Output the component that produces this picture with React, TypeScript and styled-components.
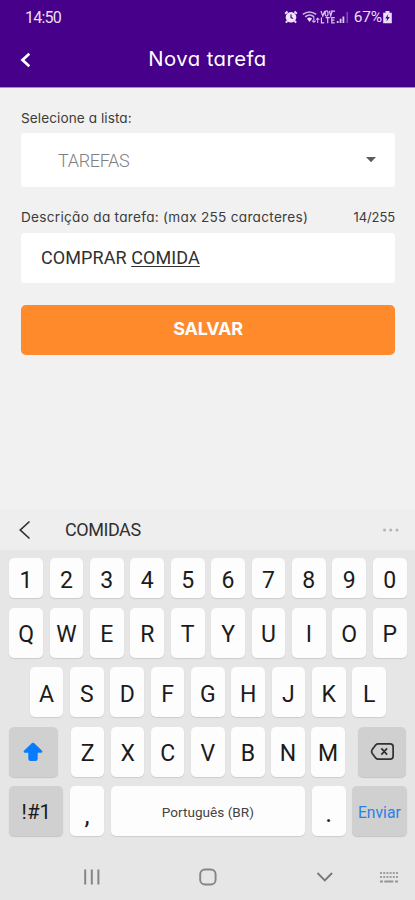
import React from 'react';
import styled, { createGlobalStyle } from 'styled-components';

const GlobalStyle = createGlobalStyle`
  * { box-sizing: border-box; }
  body { margin: 0; background: #f1f1f1; }
`;

const Screen = styled.div`
  width: 415px;
  height: 900px;
  display: flex;
  flex-direction: column;
  background: #f1f1f1;
  font-family: Roboto, sans-serif;
  overflow: hidden;
`;

const Header = styled.header`
  height: 88px;
  flex: none;
  background: #470089;
  border-bottom: 1px solid #a78bc8;
  color: #fff;
`;

const StatusBar = styled.div`
  height: 34px;
  padding: 0 22px 0 25px;
  display: flex;
  align-items: center;
  justify-content: space-between;
  color: #e9def5;
`;

const Clock = styled.span`
  font-size: 16px;
  line-height: 34px;
  letter-spacing: -0.8px;
  padding-top: 1px;
`;

const StatusIcons = styled.div`
  display: flex;
  align-items: center;
`;

const Battery = styled.span`
  font-size: 15.5px;
  letter-spacing: -0.2px;
  margin-left: 5px;
`;

const TitleBar = styled.div`
  height: 52px;
  display: grid;
  grid-template-columns: 50px 1fr 50px;
  align-items: center;
  padding-bottom: 3px;
`;

const BackIcon = styled.svg`
  margin-left: 19px;
  margin-top: 3px;
`;

const Title = styled.h1`
  margin: 0;
  text-align: center;
  font: 400 20.3px/26px Inter, sans-serif;
  font-feature-settings: 'cv11';
  letter-spacing: 0.45px;
`;

const Form = styled.main`
  height: 421px;
  flex: none;
  padding: 20px 20px 0 21px;
  display: flex;
  flex-direction: column;
`;

const LabelRow = styled.div<{ $top?: number }>`
  display: flex;
  justify-content: space-between;
  margin-top: ${(p) => p.$top ?? 0}px;
  height: 20px;
  color: #3c3c3c;
`;

const Label = styled.label<{ $spacing: number; $size?: number }>`
  font: 400 ${(p) => p.$size ?? 13.6}px/20px Inter, sans-serif;
  font-feature-settings: 'cv11';
  letter-spacing: ${(p) => p.$spacing}px;
  white-space: nowrap;
`;

const Field = styled.div<{ $height: number; $indent: number; $muted?: boolean }>`
  height: ${(p) => p.$height}px;
  margin-top: ${(p) => (p.$muted ? 5 : 6)}px;
  padding: 0 18px ${(p) => (p.$muted ? 0 : 2)}px ${(p) => p.$indent}px;
  display: flex;
  align-items: center;
  justify-content: space-between;
  border-radius: 4px;
  background: #fff;
  color: ${(p) => (p.$muted ? '#808080' : '#303030')};
  font-size: 18px;
  font-weight: ${(p) => (p.$muted ? 300 : 400)};
  letter-spacing: ${(p) => (p.$muted ? -0.3 : 0.08)}px;
`;

const Composing = styled.span`
  text-decoration: underline;
  text-decoration-thickness: 1px;
  text-underline-offset: 2px;
`;

const SaveButton = styled.button`
  margin-top: 22px;
  height: 50px;
  padding: 0 0 2px;
  border: 0;
  border-radius: 5px;
  background: #ff8a2c;
  color: #fff;
  font: 700 18px/24px Inter, sans-serif;
  letter-spacing: -0.25px;
`;

const Keyboard = styled.section`
  height: 391px;
  display: flex;
  flex-direction: column;
  background: #e6e6e6;
`;

const Suggestions = styled.div`
  height: 41px;
  flex: none;
  padding: 0 15px 0 18px;
  display: flex;
  align-items: center;
  background: #eee;
  color: #303030;
  font-size: 18px;
  letter-spacing: -0.45px;
`;

const Suggestion = styled.span`
  flex: 1;
  margin-left: 33px;
`;

const Keys = styled.div`
  display: flex;
  flex-direction: column;
  gap: 9.5px;
  padding: 8px 8.5px 0 9.2px;
`;

const KeyRow = styled.div<{ $columns: string; $height?: number; $inset?: number }>`
  display: grid;
  grid-template-columns: ${(p) => p.$columns};
  column-gap: 6.7px;
  height: ${(p) => p.$height ?? 50}px;
  padding: 0 ${(p) => p.$inset ?? 0}px;
`;

const Key = styled.div<{ $tone?: 'dark'; $size?: number; $color?: string; $drop?: number }>`
  display: flex;
  align-items: center;
  justify-content: center;
  padding-top: ${(p) => p.$drop ?? 4}px;
  border-radius: 5px;
  background: ${(p) => (p.$tone === 'dark' ? '#d0d0d0' : '#fdfdfd')};
  box-shadow: 0 1px 1px ${(p) => (p.$tone === 'dark' ? '#c4c4c4' : '#cdcdcd')};
  color: ${(p) => p.$color ?? '#1b1b1b'};
  font-size: ${(p) => p.$size ?? 23}px;
  line-height: 1;
  white-space: nowrap;
`;

const NavBar = styled.nav`
  height: 46px;
  margin-top: auto;
  display: grid;
  grid-template-columns: 184px 48px 183px;
  align-items: center;
  justify-items: center;
`;

const NavEnd = styled.div`
  width: 100%;
  display: flex;
  align-items: center;
  justify-content: space-between;
  padding: 0 15px 0 84px;
`;

const AlarmIcon = () => (
  <svg width="14" height="14" viewBox="0 0 14 14">
    <path d="M1.2 3.7 3.5 1.5M12.8 3.7 10.5 1.5M3.4 11l-1.5 1.7M10.6 11l1.5 1.7" stroke="#e9def5" strokeWidth="2" />
    <circle cx="7" cy="7.2" r="5.3" fill="#efe6f8" />
    <path d="M7 4.6v3l2 .9" fill="none" stroke="#470089" strokeWidth="1.2" />
  </svg>
);

const WifiIcon = () => (
  <svg width="18" height="14" viewBox="0 0 17 14" preserveAspectRatio="none">
    <g fill="none" stroke="#cdbbe1" strokeWidth="1.5">
      <path d="M.8 4.4Q7 -.4 13.4 4.4M3 6.8Q7.2 3.4 11.4 6.8" />
      <path d="M11.2 7v5.4m-1.8-1.8 1.8 1.8 1.7-1.8M14.8 13V8.2m-1.5 1.5 1.5-1.5 1.6 1.5" strokeWidth="1" />
    </g>
    <path d="M4.7 8.4q2.4-1.8 4.8 0L7.1 12Z" fill="#e9def5" />
  </svg>
);

const VolteIcon = () => (
  <svg width="16" height="14" viewBox="0 0 17 14" preserveAspectRatio="none">
    <path
      d="M1 1l2 5 2-5M8.5 2.4a1.4 1.4 0 0 0-3 0v2.2a1.4 1.4 0 0 0 3 0ZM10 1l1.4 5 1.5-5m-1.5 0h4.6M1.5 7.4v5.4h3M6 7.6h4.4m-2.2 0v5.6M15.7 7.6h-3.2v5.2h3.2m-3.2-2.6h2.8"
      fill="none"
      stroke="#d8c9ea"
      strokeWidth="1.25"
    />
  </svg>
);

const SignalIcon = () => (
  <svg width="13" height="14" viewBox="0 0 13 14">
    <path d="M1.7 13v-2M4.6 13V8.8M7.4 13V6.4" stroke="#d9caea" strokeWidth="1.8" />
    <path d="M11.2 13V2" stroke="#8a63b5" strokeWidth="1.2" />
  </svg>
);

const BatteryIcon = () => (
  <svg width="11" height="14" viewBox="0 0 11 14">
    <path d="M3.5 1h4v1.8h2.3v10.4H1.2V2.8h2.3Z" fill="#e9def5" />
    <path d="m6.2 4.3-3 4.1h1.9l-.6 3 3.3-4.4H5.7Z" fill="#470089" />
  </svg>
);

const letters = (text: string) => text.split('').map((c) => <Key key={c}>{c}</Key>);

export default function App() {
  return (
    <Screen>
      <GlobalStyle />
      <Header>
        <StatusBar>
          <Clock>14:50</Clock>
          <StatusIcons>
            <AlarmIcon />
            <svg width="4" height="14" />
            <WifiIcon />
            <VolteIcon />
            <SignalIcon />
            <Battery>67%</Battery>
            <BatteryIcon />
          </StatusIcons>
        </StatusBar>
        <TitleBar>
          <BackIcon width="14" height="16" viewBox="0 0 14 16">
            <path d="M10.3 1.8 3.5 8l6.8 6.2" fill="none" stroke="#fff" strokeWidth="2.7" />
          </BackIcon>
          <Title>Nova tarefa</Title>
        </TitleBar>
      </Header>

      <Form>
        <LabelRow>
          <Label $spacing={0.08}>Selecione a lista:</Label>
        </LabelRow>
        <Field $height={54} $indent={37} $muted>
          <span>TAREFAS</span>
          <svg width="12" height="8" viewBox="0 0 12 8">
            <path d="M1 1h10L6 6.3Z" fill="#5c5c5c" />
          </svg>
        </Field>
        <LabelRow $top={20}>
          <Label $spacing={0.29}>Descrição da tarefa: (max 255 caracteres)</Label>
          <Label $spacing={-0.1} $size={13}>14/255</Label>
        </LabelRow>
        <Field $height={50} $indent={20}>
          <span>
            COMPRAR <Composing>COMIDA</Composing>
          </span>
        </Field>
        <SaveButton>SALVAR</SaveButton>
      </Form>

      <Keyboard>
        <Suggestions>
          <svg width="14" height="22" viewBox="0 0 14 22">
            <path d="M11.5 2.5 2.3 11l9.2 8.5" fill="none" stroke="#303030" strokeWidth="1.7" />
          </svg>
          <Suggestion>COMIDAS</Suggestion>
          <svg width="18" height="4" viewBox="0 0 18 4" fill="#b4b4b4">
            <circle cx="2.5" cy="2" r="1.5" />
            <circle cx="8.7" cy="2" r="1.5" />
            <circle cx="15" cy="2" r="1.5" />
          </svg>
        </Suggestions>
        <Keys>
          <KeyRow $columns="repeat(10, 1fr)" $height={40}>
            {letters('1234567890')}
          </KeyRow>
          <KeyRow $columns="repeat(10, 1fr)">{letters('QWERTYUIOP')}</KeyRow>
          <KeyRow $columns="repeat(9, 1fr)" $inset={20.6}>
            {letters('ASDFGHJKL')}
          </KeyRow>
          <KeyRow $columns="48.4px 0 repeat(7, 1fr) 0 48.4px">
            <Key $tone="dark" $drop={1}>
              <svg width="22" height="22" viewBox="0 0 22 22">
                <path
                  d="M10 2.1q1-.9 2 0l7.8 7.4q1.4 1.8-.6 2.2h-3.5v6q0 2.2-2.2 2.2H8.5q-2.2 0-2.2-2.2v-6H2.8q-2-.4-.6-2.2Z"
                  fill="#087cfc"
                />
              </svg>
            </Key>
            <span />
            {letters('ZXCVBNM')}
            <span />
            <Key $tone="dark" $drop={0}>
              <svg width="25" height="19" viewBox="0 0 26 20">
                <path
                  d="M8.3 2H21q3.2 0 3.2 3v10q0 3-3.2 3H8.3Q7 18 6 17L2.2 12q-1.3-2 0-4L6 3q1-1 2.3-1ZM11.8 6.7l6 6.6m0-6.6-6 6.6"
                  fill="none"
                  stroke="#303030"
                  strokeWidth="1.8"
                />
              </svg>
            </Key>
          </KeyRow>
          <KeyRow $columns="54.3px 33.7px 1fr 33.7px 54.3px">
            <Key $tone="dark" $size={20.5} $drop={2}>!#1</Key>
            <Key $size={26} $drop={8}>,</Key>
            <Key $size={13.6} $color="#444">Português (BR)</Key>
            <Key $size={26} $drop={4}>.</Key>
            <Key $tone="dark" $size={15.7} $color="#2b7fe8">Enviar</Key>
          </KeyRow>
        </Keys>
        <NavBar>
          <svg width="18" height="18" viewBox="0 0 18 18">
            <path d="M2.2 1.5v15M8.8 1.5v15M15.4 1.5v15" stroke="#858585" strokeWidth="2" />
          </svg>
          <svg width="18" height="18" viewBox="0 0 18 18">
            <rect x="1.2" y="1.5" width="15.4" height="15" rx="4.8" fill="none" stroke="#858585" strokeWidth="1.9" />
          </svg>
          <NavEnd>
            <svg width="18" height="12" viewBox="0 0 18 12">
              <path d="m1.5 2 7.3 7.5L16.1 2" fill="none" stroke="#777" strokeWidth="1.8" />
            </svg>
            <svg width="22" height="14" viewBox="0 0 22 14">
              <path d="M2 3h18M2 7h18" stroke="#a0a0a0" strokeWidth="2" strokeDasharray="2 1.2" />
              <path d="M2 11.4h3M6.3 11.4h9M17 11.4h3" stroke="#959595" strokeWidth="2" />
            </svg>
          </NavEnd>
        </NavBar>
      </Keyboard>
    </Screen>
  );
}
